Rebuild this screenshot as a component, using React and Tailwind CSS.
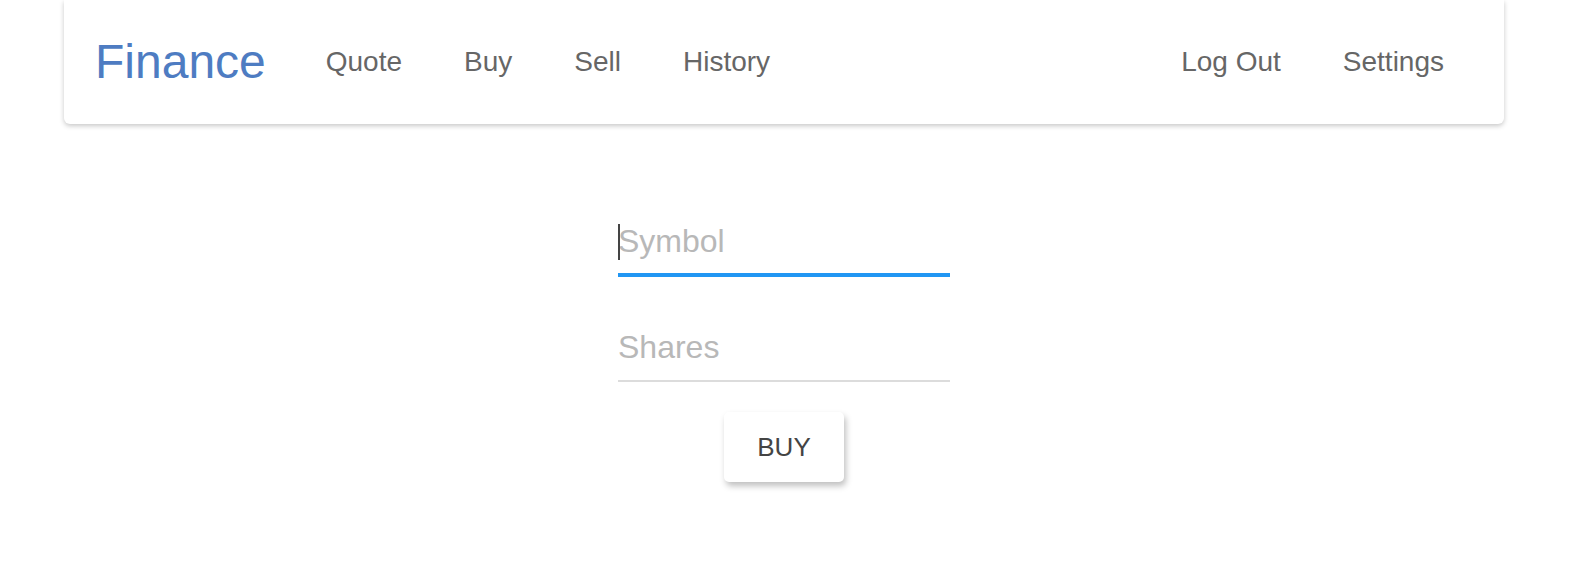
const navLinks = ['Quote', 'Buy', 'Sell', 'History'];
const rightLinks = ['Log Out', 'Settings'];

export default function App() {
  return (
    <div className="min-h-[584px] bg-white font-['Liberation_Sans',Arial,sans-serif]">
      <div className="relative ml-[64px] w-[1440px]">
        {/* Top bar */}
        <nav className="flex h-[124px] items-center justify-between rounded-b-[6px] bg-white px-[29px] shadow-[0_2px_5px_rgba(0,0,0,0.22)]">
          <div className="flex items-center">
            <a href="#" className="ml-[2px] mr-[29px] text-[48px] leading-none text-[#4e7cc2]">
              Finance
            </a>
            {navLinks.map((label) => (
              <a key={label} href="#" className="px-[31px] text-[28px] text-[#666]">
                {label}
              </a>
            ))}
          </div>
          <div className="flex items-center">
            {rightLinks.map((label) => (
              <a key={label} href="#" className="px-[31px] text-[28px] text-[#666]">
                {label}
              </a>
            ))}
          </div>
        </nav>

        {/* Buy form */}
        <form className="mt-[85px] flex flex-col items-center" onSubmit={(e) => e.preventDefault()}>
          <div className="relative">
            <input
              type="text"
              placeholder="Symbol"
              className="block h-[66px] w-[332px] border-b-2 border-[#2196f3] bg-transparent text-[32px] text-[#333] shadow-[0_2px_0_0_#2196f3] outline-none placeholder:text-[#b8b8b8]"
            />
            <span className="absolute left-0 top-[15px] h-[36px] w-[2px] bg-[#444]" />
          </div>
          <input
            type="text"
            placeholder="Shares"
            className="mt-[40px] block h-[67px] w-[332px] border-b-2 border-[#dcdcdc] bg-transparent text-[32px] text-[#333] outline-none placeholder:text-[#b8b8b8]"
          />
          <button
            type="submit"
            className="mt-[30px] h-[70px] w-[120px] rounded-[5px] bg-white text-[26px] text-[#444] shadow-[2px_4px_6px_rgba(0,0,0,0.25)]"
          >
            BUY
          </button>
        </form>
      </div>
    </div>
  );
}
